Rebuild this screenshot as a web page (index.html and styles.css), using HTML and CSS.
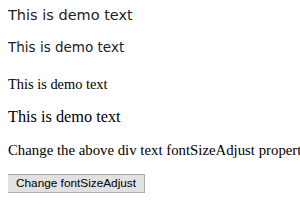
FILE: index.html
```html
<!DOCTYPE html>
<html lang="en">
<head>
    <meta charset="UTF-8">
    <title>fontSizeAdjust demo</title>
    <link rel="stylesheet" href="styles.css">
</head>
<body>
    <div class="demo sans big">This is demo text</div>
    <div class="demo sans small">This is demo text</div>
    <div class="demo serif small">This is demo text</div>
    <div class="demo serif big">This is demo text</div>

    <p class="note">Change the above div text fontSizeAdjust property:</p>
    <button class="btn">Change fontSizeAdjust</button>
</body>
</html>
```

FILE: styles.css
```css
html {
    overflow: hidden;
}

body {
    margin: 7px 0 7px 8px;
    font-family: "Liberation Serif", serif;
    font-size: 16px;
    color: #000;
    background: #fff;
}

.demo {
    white-space: nowrap;
    margin-bottom: 16px;
}

.sans {
    font-family: "DejaVu Sans", Verdana, sans-serif;
    color: #222;
}

.sans.big {
    font-size: 14.5px;
}

.sans.small {
    font-size: 13.5px;
    margin-bottom: 21px;
}

.serif.small {
    font-size: 14.4px;
    margin-bottom: 14px;
}

.serif.big {
    font-size: 16.3px;
    margin-bottom: 15px;
}

.note {
    white-space: nowrap;
    overflow: hidden;
    font-size: 14.8px;
    margin: 0 0 14px;
}

.btn {
    font-family: "Liberation Sans", Arial, sans-serif;
    font-size: 11.8px;
    height: 19px;
    margin-left: -1px;
    padding: 0 8px;
    background: #e1e1e1;
    border: 1px solid #adadad;
    border-radius: 0;
    color: #000;
}
```
